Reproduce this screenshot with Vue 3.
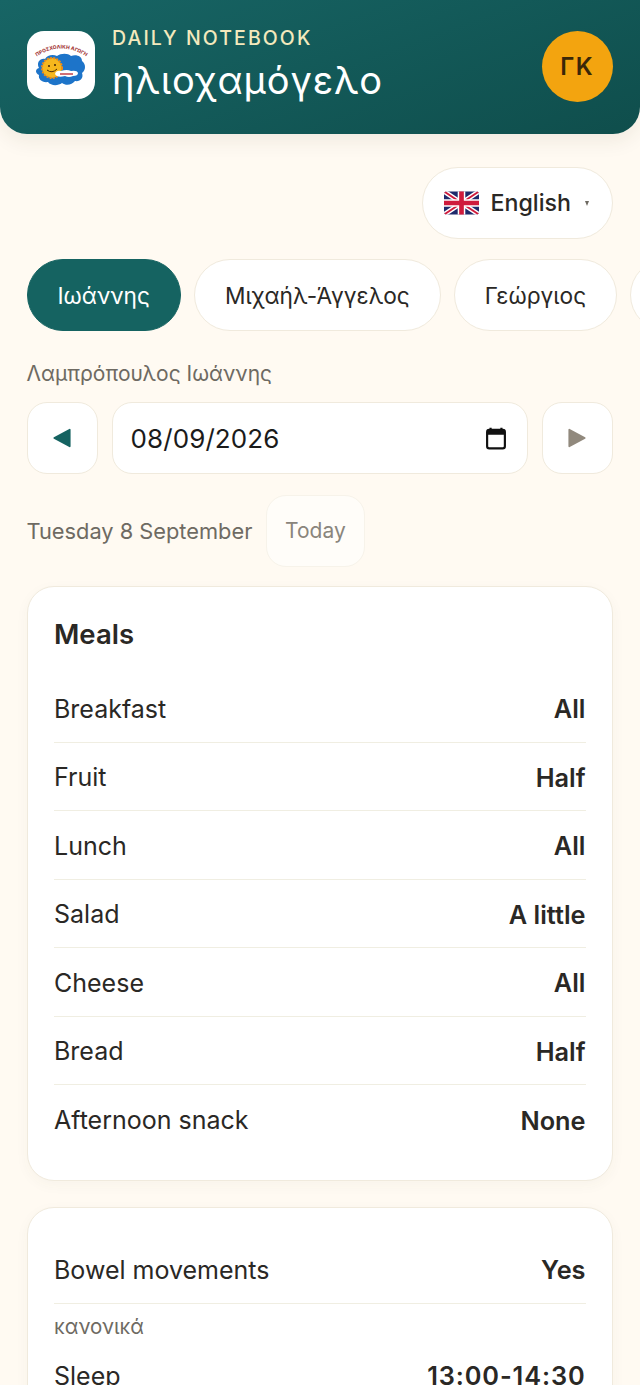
<script setup>
const kids = [
  { name: 'Ιωάννης', active: true },
  { name: 'Μιχαήλ-Άγγελος' },
  { name: 'Γεώργιος' },
  { name: 'Ελένη' }
]
const meals = [
  ['Breakfast', 'All'],
  ['Fruit', 'Half'],
  ['Lunch', 'All'],
  ['Salad', 'A little'],
  ['Cheese', 'All'],
  ['Bread', 'Half'],
  ['Afternoon snack', 'None']
]
</script>

<template>
  <div class="page">
    <header class="hero">
      <div class="logo">
        <svg viewBox="0 0 68 68" width="68" height="68">
          <path id="logoArc" d="M9 26 Q34 9 60 26" fill="none" />
          <text font-size="5" font-weight="800" fill="#a8433f" font-family="Inter, sans-serif">
            <textPath href="#logoArc" startOffset="50%" text-anchor="middle">ΠΡΟΣΧΟΛΙΚΗ ΑΓΩΓΗ</textPath>
          </text>
          <path d="M12 37c-3-5 1-10 6-9 2-4 8-5 12-3 4-3 11-3 14 0 5-2 11 0 11 5 4 3 4 9 0 12 2 5-2 9-7 8-3 4-9 5-13 2-4 3-11 3-14-1-6 1-10-3-9-7-4-2-4-6 0-7z" fill="#1d74c9" />
          <circle cx="25" cy="37" r="10" fill="#f6b71d" stroke="#ee8d16" stroke-width="2" stroke-dasharray="2 1.2" />
          <circle cx="22" cy="35" r="1.1" fill="#4a2a08" />
          <circle cx="28" cy="34" r="1.1" fill="#4a2a08" />
          <path d="M20 39q5 4 10-1" fill="none" stroke="#4a2a08" stroke-width="1" />
          <path d="M28 43q1-4 6-3 6-2 10 0 6-1 7 2 0 3-5 3-4 2-8 0-8 2-10-2z" fill="#fff" />
          <path d="M33 43h13" stroke="#c2404a" stroke-width="1.4" />
        </svg>
      </div>
      <div class="hero-text">
        <div class="eyebrow">DAILY NOTEBOOK</div>
        <div class="brand">ηλιοχαμόγελο</div>
      </div>
      <div class="avatar">ΓΚ</div>
    </header>

    <main class="content">
      <div class="lang-row">
        <button class="lang">
          <svg class="flag" viewBox="0 0 60 40" width="35" height="24">
            <defs>
              <clipPath id="flagClip"><rect width="60" height="40" rx="5" /></clipPath>
            </defs>
            <g clip-path="url(#flagClip)">
              <rect width="60" height="40" fill="#1f2a6b" />
              <path d="M0 0L60 40M60 0L0 40" stroke="#fff" stroke-width="8" />
              <path d="M0 0L60 40M60 0L0 40" stroke="#cf1b3c" stroke-width="3" />
              <path d="M30 0V40M0 20H60" stroke="#fff" stroke-width="13" />
              <path d="M30 0V40M0 20H60" stroke="#cf1b3c" stroke-width="8" />
            </g>
          </svg>
          <span class="lang-name">English</span>
          <span class="caret"></span>
        </button>
      </div>

      <div class="chips">
        <button v-for="k in kids" :key="k.name" class="chip" :class="{ active: k.active }">{{ k.name }}</button>
      </div>

      <div class="full-name">Λαμπρόπουλος Ιωάννης</div>

      <div class="date-row">
        <button class="nav">
          <svg viewBox="0 0 20 20" width="22" height="22">
            <path d="M3 10L17 2.5V17.5Z" fill="#156361" stroke="#156361" stroke-width="1.6" stroke-linejoin="round" />
          </svg>
        </button>
        <div class="date-field">
          <span>08/09/2026</span>
          <svg viewBox="0 0 24 24" width="26" height="26" class="cal">
            <path d="M7 2.5v3M17 2.5v3" stroke="#111" stroke-width="2" />
            <rect x="3.8" y="4.5" width="16.4" height="17" rx="2" fill="none" stroke="#111" stroke-width="2" />
            <rect x="3.8" y="4.5" width="16.4" height="4.5" fill="#111" />
          </svg>
        </div>
        <button class="nav">
          <svg viewBox="0 0 20 20" width="22" height="22">
            <path d="M17 10L3 2.5V17.5Z" fill="#91897d" stroke="#91897d" stroke-width="1.6" stroke-linejoin="round" />
          </svg>
        </button>
      </div>

      <div class="day-row">
        <span class="day">Tuesday 8 September</span>
        <button class="today">Today</button>
      </div>

      <section class="card meals">
        <h2>Meals</h2>
        <div v-for="m in meals" :key="m[0]" class="row">
          <span>{{ m[0] }}</span>
          <strong>{{ m[1] }}</strong>
        </div>
      </section>

      <section class="card second">
        <div class="row tall">
          <span>Bowel movements</span>
          <strong>Yes</strong>
        </div>
        <div class="note">κανονικά</div>
        <div class="row plain">
          <span>Sleep</span>
          <strong class="time">13:00-14:30</strong>
        </div>
      </section>
    </main>
  </div>
</template>

<style>
html, body { margin: 0; background: #fffaf2; }
html { overflow: hidden; height: 1385px; }
</style>

<style scoped>
.page {
  width: 640px;
  height: 1385px;
  overflow: hidden;
  background: #fffaf2;
  font-family: Inter, "Noto Sans", sans-serif;
  color: #2a2825;
}
button { font-family: inherit; cursor: pointer; }
.hero {
  box-sizing: border-box;
  height: 134px;
  padding: 0 27px 4px;
  display: flex;
  align-items: center;
  gap: 17px;
  background: linear-gradient(160deg, #176565 0%, #0f4e4c 100%);
  border-radius: 0 0 27px 27px;
  box-shadow: 0 7px 20px rgba(60, 50, 30, 0.08);
}
.logo {
  width: 68px;
  height: 68px;
  background: #fff;
  border-radius: 17px;
  overflow: hidden;
  flex: none;
}
.logo svg { display: block; }
.hero-text { flex: 1; min-width: 0; margin-bottom: 3px; }
.eyebrow {
  font-size: 19.5px;
  line-height: 24px;
  font-weight: 500;
  letter-spacing: 2.1px;
  color: #f3e9bd;
}
.brand {
  font-size: 38px;
  line-height: 44px;
  margin-top: 8px;
  font-weight: 400;
  letter-spacing: 0.9px;
  color: #fff;
}
.avatar {
  width: 71.5px;
  height: 71.5px;
  margin-top: 3px;
  border-radius: 50%;
  background: #f3a40f;
  color: #3a2708;
  display: flex;
  align-items: center;
  justify-content: center;
  font-size: 24px;
  font-weight: 600;
  letter-spacing: 1.5px;
  flex: none;
}
.content { padding: 33px 26.5px 0; }
.lang-row { display: flex; justify-content: flex-end; padding-right: 1px; }
.lang {
  box-sizing: border-box;
  width: 191px;
  height: 72px;
  padding: 0 23px 0 21px;
  display: flex;
  align-items: center;
  background: #fff;
  border: 1.5px solid #f0eadd;
  border-radius: 36px;
}
.flag { flex: none; }
.lang-name {
  margin-left: 12px;
  font-size: 23.2px;
  font-weight: 500;
  color: #2a2825;
}
.caret {
  margin-left: auto;
  width: 0;
  height: 0;
  border-left: 2.5px solid transparent;
  border-right: 2.5px solid transparent;
  border-top: 5px solid #6e6a62;
}
.chips {
  display: flex;
  gap: 13px;
  margin-top: 20px;
  width: 640px;
}
.chip {
  box-sizing: border-box;
  flex: none;
  height: 72px;
  padding: 0 30px;
  background: #fff;
  border: 1.5px solid #f0eadd;
  border-radius: 36px;
  font-size: 22.7px;
  color: #2a2825;
}
.chip.active {
  background: #156361;
  border-color: #156361;
  color: #fff;
}
.full-name {
  margin-top: 29px;
  font-size: 21px;
  line-height: 27px;
  color: #6e6a62;
}
.date-row {
  display: flex;
  gap: 14px;
  margin-top: 15px;
  width: 586.5px;
}
.nav {
  box-sizing: border-box;
  flex: none;
  width: 71.5px;
  height: 72px;
  background: #fff;
  border: 1.5px solid #f0eadd;
  border-radius: 20px;
  display: flex;
  align-items: center;
  justify-content: center;
  padding: 0;
}
.date-field {
  box-sizing: border-box;
  flex: 1;
  height: 72px;
  padding: 0 18px 0 17.5px;
  background: #fff;
  border: 1.5px solid #f0eadd;
  border-radius: 20px;
  display: flex;
  align-items: center;
  justify-content: space-between;
  font-size: 26px;
  letter-spacing: 0.1px;
  color: #1b1b1b;
}
.cal { flex: none; }
.day-row {
  display: flex;
  align-items: center;
  gap: 13.5px;
  margin-top: 20.5px;
}
.day { font-size: 21.8px; color: #6e6a62; }
.today {
  box-sizing: border-box;
  width: 99px;
  height: 72px;
  background: #fffdf9;
  border: 1.5px solid #f7f3ea;
  border-radius: 20px;
  font-size: 21px;
  color: #8a857c;
  padding: 0;
}
.card {
  box-sizing: border-box;
  width: 586.5px;
  background: #fff;
  border: 1.5px solid #f0eadd;
  border-radius: 27px;
  padding: 0 26.5px;
  box-shadow: 0 4px 14px rgba(80, 70, 40, 0.04);
}
.meals {
  margin-top: 19.5px;
  height: 595px;
  padding-top: 29px;
}
h2 {
  margin: 0 0 22.4px;
  font-size: 27.5px;
  line-height: 36px;
  font-weight: 600;
  color: #2a2825;
}
.row {
  box-sizing: border-box;
  height: 68.5px;
  padding-top: 1.5px;
  display: flex;
  align-items: center;
  justify-content: space-between;
  border-bottom: 1.5px solid #f0eee2;
  font-size: 25px;
  color: #2a2825;
}
.row strong { font-weight: 600; font-size: 25.3px; }
.row strong.time { letter-spacing: 0.9px; }
.meals .row:last-child { border-bottom: none; }
.second {
  margin-top: 26px;
  height: 300px;
  padding-top: 27px;
}
.row.tall { height: 69px; }
.note {
  margin-top: 9px;
  font-size: 20.5px;
  line-height: 28px;
  color: #6e6a62;
}
.row.plain { border-bottom: none; height: 62px; margin-top: 3px; }
</style>
